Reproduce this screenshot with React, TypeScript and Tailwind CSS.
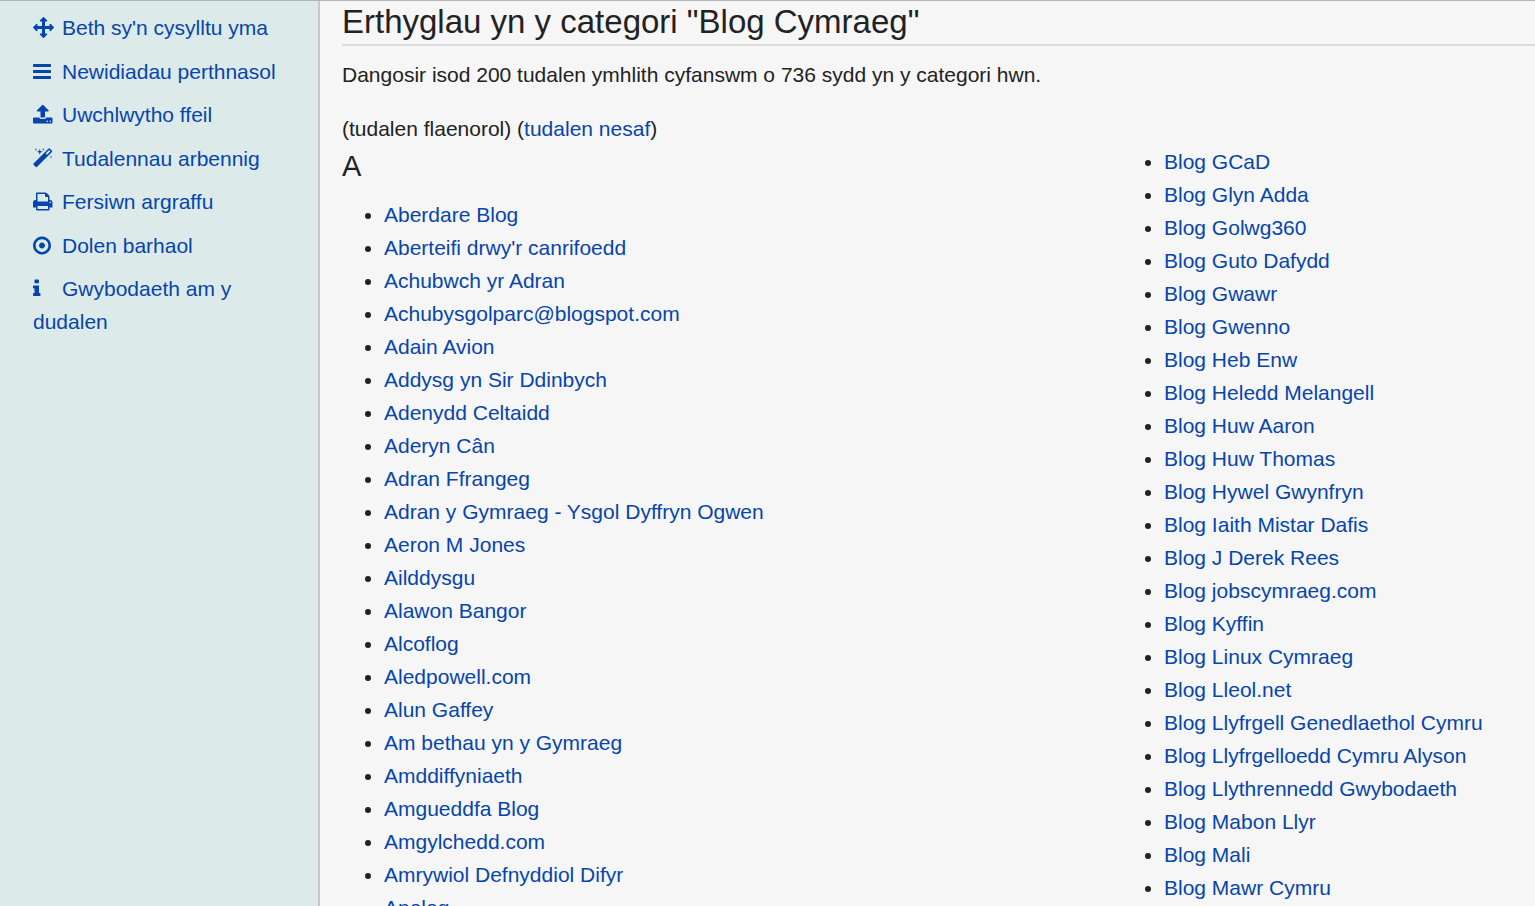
import React from 'react';

interface Tool {
  label: string;
  viewBox: string;
  path: string;
}

const TOOLS: Tool[] = [
  {
    label: "Beth sy'n cysylltu yma",
    viewBox: '0 0 1792 1792',
    path: 'M1792 896q0 26-19 45l-256 256q-19 19-45 19t-45-19-19-45v-128h-384v384h128q26 0 45 19t19 45-19 45l-256 256q-19 19-45 19t-45-19l-256-256q-19-19-19-45t19-45 45-19h128v-384h-384v128q0 26-19 45t-45 19-45-19l-256-256q-19-19-19-45t19-45l256-256q19-19 45-19t45 19 19 45v128h384v-384h-128q-26 0-45-19t-19-45 19-45l256-256q19-19 45-19t45 19l256 256q19 19 19 45t-19 45-45 19h-128v384h384v-128q0-26 19-45t45-19 45 19l256 256q19 19 19 45z',
  },
  {
    label: 'Newidiadau perthnasol',
    viewBox: '128 0 1792 1792',
    path: 'M1664 1344v128q0 26-19 45t-45 19h-1408q-26 0-45-19t-19-45v-128q0-26 19-45t45-19h1408q26 0 45 19t19 45zm0-512v128q0 26-19 45t-45 19h-1408q-26 0-45-19t-19-45v-128q0-26 19-45t45-19h1408q26 0 45 19t19 45zm0-512v128q0 26-19 45t-45 19h-1408q-26 0-45-19t-19-45v-128q0-26 19-45t45-19h1408q26 0 45 19t19 45z',
  },
  {
    label: 'Uwchlwytho ffeil',
    viewBox: '64 0 1792 1792',
    path: 'M1344 1472q0-26-19-45t-45-19-45 19-19 45 19 45 45 19 45-19 19-45zm256 0q0-26-19-45t-45-19-45 19-19 45 19 45 45 19 45-19 19-45zm128-224v320q0 40-28 68t-68 28h-1472q-40 0-68-28t-28-68v-320q0-40 28-68t68-28h427q21 56 70.5 92t110.5 36h256q61 0 110.5-36t70.5-92h427q40 0 68 28t28 68zm-325-648q-17 40-59 40h-256v448q0 26-19 45t-45 19h-256q-26 0-45-19t-19-45v-448h-256q-42 0-59-40-17-39 14-69l448-448q18-19 45-19t45 19l448 448q31 30 14 69z',
  },
  {
    label: 'Tudalennau arbennig',
    viewBox: '64 0 1792 1792',
    path: 'M1254 581l293-293-107-107-293 293zm447-293q0 27-18 45l-1286 1286q-18 18-45 18t-45-18l-198-198q-18-18-18-45t18-45l1286-1286q18-18 45-18t45 18l198 198q18 18 18 45zm-1351-190l98 30-98 30-30 98-30-98-98-30 98-30 30-98zm350 162l196 60-196 60-60 196-60-196-196-60 196-60 60-196zm930 478l98 30-98 30-30 98-30-98-98-30 98-30 30-98zm-640-640l98 30-98 30-30 98-30-98-98-30 98-30 30-98z',
  },
  {
    label: 'Fersiwn argraffu',
    viewBox: '64 0 1792 1792',
    path: 'M448 1536h896v-256h-896v256zm0-640h896v-384h-160q-40 0-68-28t-28-68v-160h-640v640zm1152 64q0-26-19-45t-45-19-45 19-19 45 19 45 45 19 45-19 19-45zm128 0v416q0 13-9.5 22.5t-22.5 9.5h-224v160q0 40-28 68t-68 28h-960q-40 0-68-28t-28-68v-160h-224q-13 0-22.5-9.5t-9.5-22.5v-416q0-79 56.5-135.5t135.5-56.5h64v-544q0-40 28-68t68-28h672q40 0 88 20t76 48l152 152q28 28 48 76t20 88v256h64q79 0 135.5 56.5t56.5 135.5z',
  },
  {
    label: 'Dolen barhaol',
    viewBox: '128 0 1792 1792',
    path: 'M896 640q106 0 181 75t75 181-75 181-181 75-181-75-75-181 75-181 181-75zm0-288q-148 0-273 73t-198 198-73 273 73 273 198 198 273 73 273-73 198-198 73-273-73-273-198-198-273-73zm768 544q0 209-103 385.5t-279.5 279.5-385.5 103-385.5-103-279.5-279.5-103-385.5 103-385.5 279.5-279.5 385.5-103 385.5 103 279.5 279.5 103 385.5z',
  },
  {
    label: 'Gwybodaeth am y dudalen',
    viewBox: '576 0 1792 1792',
    path: 'M1216 1344v128q0 26-19 45t-45 19h-512q-26 0-45-19t-19-45v-128q0-26 19-45t45-19h64v-384h-64q-26 0-45-19t-19-45v-128q0-26 19-45t45-19h384q26 0 45 19t19 45v576h64q26 0 45 19t19 45zm-128-1152v192q0 26-19 45t-45 19h-256q-26 0-45-19t-19-45v-192q0-26 19-45t45-19h256q26 0 45 19t19 45z',
  },
];

const FIRST_COLUMN = [
  'Aberdare Blog',
  "Aberteifi drwy'r canrifoedd",
  'Achubwch yr Adran',
  'Achubysgolparc@blogspot.com',
  'Adain Avion',
  'Addysg yn Sir Ddinbych',
  'Adenydd Celtaidd',
  'Aderyn Cân',
  'Adran Ffrangeg',
  'Adran y Gymraeg - Ysgol Dyffryn Ogwen',
  'Aeron M Jones',
  'Ailddysgu',
  'Alawon Bangor',
  'Alcoflog',
  'Aledpowell.com',
  'Alun Gaffey',
  'Am bethau yn y Gymraeg',
  'Amddiffyniaeth',
  'Amgueddfa Blog',
  'Amgylchedd.com',
  'Amrywiol Defnyddiol Difyr',
  'Anelog',
];

const SECOND_COLUMN = [
  'Blog GCaD',
  'Blog Glyn Adda',
  'Blog Golwg360',
  'Blog Guto Dafydd',
  'Blog Gwawr',
  'Blog Gwenno',
  'Blog Heb Enw',
  'Blog Heledd Melangell',
  'Blog Huw Aaron',
  'Blog Huw Thomas',
  'Blog Hywel Gwynfryn',
  'Blog Iaith Mistar Dafis',
  'Blog J Derek Rees',
  'Blog jobscymraeg.com',
  'Blog Kyffin',
  'Blog Linux Cymraeg',
  'Blog Lleol.net',
  'Blog Llyfrgell Genedlaethol Cymru',
  'Blog Llyfrgelloedd Cymru Alyson',
  'Blog Llythrennedd Gwybodaeth',
  'Blog Mabon Llyr',
  'Blog Mali',
  'Blog Mawr Cymru',
];

const ArticleList: React.FC<{ titles: string[] }> = ({ titles }) => (
  <ul className="list-disc pl-[42px]">
    {titles.map((title) => (
      <li key={title}>
        <a href="#" className="text-[#0645ad] hover:underline">{title}</a>
      </li>
    ))}
  </ul>
);

const Sidebar: React.FC = () => (
  <nav className="w-80 shrink-0 border-r-2 border-[#c8c8c8] bg-[#dceae9] pt-[10px] pr-10 pl-[33px]">
    <ul>
      {TOOLS.map((tool) => (
        <li key={tool.label} className="odd:mb-[11px] even:mb-[10px]">
          <a href="#" className="text-[#0645ad] hover:underline">
            <svg
              viewBox={tool.viewBox}
              className="mr-2 inline-block size-[21px] align-[-3px]"
              fill="currentColor"
              aria-hidden="true"
            >
              <path d={tool.path} />
            </svg>
            {tool.label}
          </a>
        </li>
      ))}
    </ul>
  </nav>
);

const App: React.FC = () => {
  return (
    <div className="flex h-screen overflow-hidden border-t border-[#b5b5b5] bg-[#f6f6f6] font-['Liberation_Sans',Arial,sans-serif] text-[21px] leading-[33px] text-[#222]">
      <Sidebar />
      <main className="min-w-0 flex-1 pl-[22px]">
        <h2 className="border-b-2 border-[#ddd] pb-[2px] text-[33px] leading-[41px]">
          Erthyglau yn y categori "Blog Cymraeg"
        </h2>
        <p className="mt-3 mb-[21px]">
          Dangosir isod 200 tudalen ymhlith cyfanswm o 736 sydd yn y categori hwn.
        </p>
        <p>
          (tudalen flaenorol) (<a href="#" className="text-[#0645ad] hover:underline">tudalen nesaf</a>)
        </p>
        <div className="grid grid-cols-[780fr_413fr]">
          <section>
            <h3 className="mb-[10px] text-[29px] leading-[43px]">A</h3>
            <ArticleList titles={FIRST_COLUMN} />
          </section>
          <section>
            <ArticleList titles={SECOND_COLUMN} />
          </section>
        </div>
      </main>
    </div>
  );
};

export default App;
